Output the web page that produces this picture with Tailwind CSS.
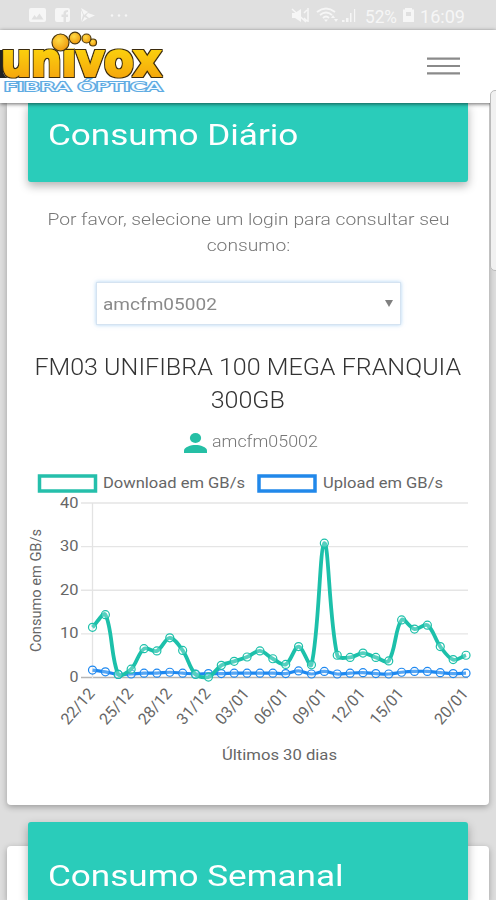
<!DOCTYPE html>
<html lang="pt-BR">
    <head>
        <meta charset="UTF-8">
        <meta name="viewport" content="width=device-width, initial-scale=1.0">
        <title>Univox - Consumo</title>
        <script src="https://cdn.jsdelivr.net/npm/@tailwindcss/browser@4"></script>
    </head>
    <body class="relative flex h-[900px] w-[496px] flex-col overflow-hidden bg-[#dedede] font-['Roboto',sans-serif]">
        <!-- Barra de status -->
        <div class="flex h-[30px] shrink-0 items-center bg-[#e0e0e0] text-[#f6f6f6]">
            <svg class="h-[30px] w-[496px]" viewBox="0 0 496 30" fill="currentColor">
                <path fill-rule="evenodd" d="M31 8h13a2 2 0 0 1 2 2v10a2 2 0 0 1-2 2H31a2 2 0 0 1-2-2V10a2 2 0 0 1 2-2zm.5 11.500h12l-4-6-3 4-2-2.500z" />
                <path fill-rule="evenodd" d="M57 8h11a2 2 0 0 1 2 2v10a2 2 0 0 1-2 2h-2v-5h2v-2.500h-2v-1c0-1 .5-1.500 2-1.500V10c-3 0-4.500 1-4.500 3v1.500h-2V17h2v5H57a2 2 0 0 1-2-2V10a2 2 0 0 1 2-2z" />
                <path d="M81 8l7 4-4 3zM81 10l2 5-2 7zM82 22l2.500-5 3 1.500zM88 13l7 2.500-6 2.500-3-2.500z" />
                <circle cx="112" cy="15.500" r="1.200" />
                <circle cx="119" cy="15.500" r="1.200" />
                <circle cx="126" cy="15.500" r="1.200" />
                <path d="M292 13h3l6-4v13l-6-4h-3z" />
                <path d="M292 9l14 13M304 13l3-3M304 18l3 3M308 8v14" fill="none" stroke="currentColor" stroke-width="1.500" />
                <path d="M317 12q9-7 18 0M320 15q6-5 12 0M323 18q3-3 6 0" fill="none" stroke="currentColor" stroke-width="1.800" />
                <path d="M326 22l-2-2.500h4zM331 18l2-3 2 3zM334 19h4l-2 3z" />
                <path d="M342 20h2.500v2H342zM346 18h2.500v4H346zM350 13h1.500v9H350zM354 9h1.200v13H354z" />
                <text x="365" y="22.500" font-size="19" textLength="32" lengthAdjust="spacingAndGlyphs">52%</text>
                <path fill-rule="evenodd" d="M405 8h7v1.500h2V22h-11V9.500h2zM406 12v4h5v-4z" />
                <text x="420" y="22.500" font-size="19" textLength="45" lengthAdjust="spacingAndGlyphs">16:09</text>
            </svg>
        </div>
        <!-- Cabeçalho -->
        <header class="z-20 flex h-[73px] shrink-0 justify-between bg-white shadow-[0_1px_4px_rgba(0,0,0,0.6)]">
            <svg class="h-[73px] w-[168px]" viewBox="0 30 168 73">
                <defs>
                    <linearGradient id="gold" x1="0" y1="0" x2="0" y2="1">
                        <stop offset="0.3" stop-color="#fbd010" />
                        <stop offset="1" stop-color="#f39a10" />
                    </linearGradient>
                    <radialGradient id="ball" cx="0.4" cy="0.35" r="0.7">
                        <stop offset="0" stop-color="#ffdb45" />
                        <stop offset="1" stop-color="#ee960b" />
                    </radialGradient>
                    <filter id="outline" x="-5%" y="-5%" width="110%" height="110%">
                        <feMorphology in="SourceAlpha" operator="dilate" radius="1" result="fat" />
                        <feFlood flood-color="#3a2c0c" />
                        <feComposite in2="fat" operator="in" />
                        <feMerge>
                            <feMergeNode />
                            <feMergeNode in="SourceGraphic" />
                        </feMerge>
                    </filter>
                </defs>
                <path d="M0 50h3v20q0 6 5 8H0z" fill="#222" />
                <text filter="url(#outline)" x="1" y="76" font-family="DejaVu Sans" font-weight="700" font-size="46" textLength="160" lengthAdjust="spacingAndGlyphs" fill="url(#gold)" stroke="url(#gold)" stroke-width="2.200">univox</text>
                <!-- tapa o pingo do i -->
                <path d="M58 34h20v14.500H58z" fill="#fff" />
                <g fill="url(#ball)" stroke="#4a380f" stroke-width="1.200">
                    <circle cx="93" cy="42.500" r="3.500" />
                    <circle cx="86.500" cy="38.500" r="4.500" />
                    <circle cx="75" cy="38" r="5.800" />
                    <circle cx="60.500" cy="42.500" r="8.500" />
                </g>
                <text x="4" y="90.500" font-family="DejaVu Sans" font-size="12" textLength="158" lengthAdjust="spacingAndGlyphs" fill="#f4faff" stroke="#5fabe2" stroke-width="2" paint-order="stroke">FIBRA ÓPTICA</text>
            </svg>
            <button class="mt-[27px] mr-[36px] h-[18px] w-[33px]">
                <svg class="h-[18px] w-[33px]" viewBox="0 0 33 18" fill="#8a8a8a">
                    <path d="M0 .5h33v2.200H0zM0 7.900h33v2.200H0zM0 15.300h33v2.200H0z" />
                </svg>
            </button>
        </header>
        <main class="flex flex-col pl-[7px]">
            <!-- Consumo diário -->
            <section class="flex h-[702px] w-[482px] shrink-0 flex-col items-center rounded-b-[4px] bg-white shadow-[0_2px_6px_rgba(0,0,0,0.3)]">
                <div class="flex h-[79px] w-[440px] shrink-0 items-start rounded-b-[3px] bg-[#2accba] pl-[20px] shadow-[0_4px_10px_rgba(0,0,0,0.3)]">
                    <h2 class="mt-[14px] origin-left scale-x-[1.17] text-[30px] leading-[36px] whitespace-nowrap text-white">Consumo Diário</h2>
                </div>
                <p class="mt-[24px] scale-x-[1.133] text-center text-[17px] leading-[26px] font-light whitespace-nowrap text-[#777]">Por favor, selecione um login para consultar seu<br>consumo:</p>
                <div class="mt-[24px] flex h-[43px] w-[305px] shrink-0 items-center justify-between border border-[#d5e3f1] bg-white pr-[7px] pl-[6px] shadow-[0_0_4px_rgba(120,180,235,0.6)]">
                    <span class="mt-[2px] origin-left scale-x-[1.12] text-[17px] text-[#8a8a8a]">amcfm05002</span>
                    <svg class="h-[7px] w-[8px]" viewBox="0 0 8 7"><path d="M0 0h8L4 7z" fill="#808080" /></svg>
                </div>
                <h3 class="mt-[26px] scale-x-[1.09] text-center text-[23px] leading-[33px] font-light whitespace-nowrap text-[#333]">FM03 UNIFIBRA 100 MEGA FRANQUIA<br>300GB</h3>
                <div class="mt-[11px] flex h-[27px] w-[128px] items-center">
                    <svg class="mt-[3px] h-[20px] w-[23px] shrink-0" viewBox="0 0 23 20" fill="#25bfa5">
                        <ellipse cx="11.500" cy="5" rx="5.600" ry="5" />
                        <path d="M0 20v-2.500C0 14 7 12 11.500 12S23 14 23 17.500V20z" />
                    </svg>
                    <span class="ml-[5px] origin-left scale-x-[1.05] text-[17px] font-light text-[#777]">amcfm05002</span>
                </div>
                <!-- Gráfico -->
                <svg id="chart" class="mt-[5px] h-[312px] w-[482px] shrink-0" viewBox="7 460 482 312" fill="#666" font-size="15.500">
                    <rect x="39.500" y="476" width="56" height="15" fill="none" stroke="#25bfab" stroke-width="3.500" />
                    <text x="103" y="488" textLength="142" lengthAdjust="spacingAndGlyphs">Download em GB/s</text>
                    <rect x="259" y="476" width="56" height="15" fill="none" stroke="#2188ea" stroke-width="3.500" />
                    <text x="323" y="488" textLength="120" lengthAdjust="spacingAndGlyphs">Upload em GB/s</text>
                    <text x="222" y="759.500" textLength="115" lengthAdjust="spacingAndGlyphs">Últimos 30 dias</text>
                    <text transform="translate(41 652) rotate(-90)" textLength="123" lengthAdjust="spacingAndGlyphs">Consumo em GB/s</text>
                </svg>
            </section>
            <!-- Consumo semanal -->
            <section class="mt-[41px] flex h-[54px] w-[482px] shrink-0 flex-col items-center rounded-t-[4px] bg-white shadow-[0_2px_6px_rgba(0,0,0,0.3)]">
                <div class="-mt-[24px] flex h-[78px] w-[440px] shrink-0 items-start rounded-t-[3px] bg-[#2accba] pl-[20px] shadow-[0_4px_10px_rgba(0,0,0,0.3)]">
                    <h2 class="mt-[36px] origin-left scale-x-[1.17] text-[30px] leading-[36px] whitespace-nowrap text-white">Consumo Semanal</h2>
                </div>
            </section>
        </main>
        <!-- Barra de rolagem -->
        <div class="absolute top-[90px] left-[489.500px] z-30 h-[181px] w-[12px] rounded-[5px] border border-[#bbb] bg-[#f1f1f1]"></div>
    </body>
</html>
<script>
const chart = document.getElementById('chart');
const left = 92.5;
const step = 12.88;
const top40 = 503;
const base = 677.5;
const unit = (base - top40) / 40;

const download = [11.5, 14.4, 0.7, 1.9, 6.6, 6.1, 9.1, 6.2, 0.7, 0.1, 2.8, 3.7, 4.7, 6.1, 4.3, 3.0, 7.1, 2.9, 30.8, 5.1, 4.6, 5.6, 4.6, 3.8, 13.2, 11.1, 12, 7.1, 4.1, 5.1];
const upload = [1.7, 1.3, 0.7, 0.8, 1, 1, 1.2, 1, 0.8, 0.9, 0.9, 1, 1, 1, 1, 0.9, 1.5, 0.8, 1.4, 0.8, 1, 1.1, 0.9, 0.8, 1.2, 1.4, 1.4, 1.1, 0.9, 1];
const days = { 0: '22/12', 3: '25/12', 6: '28/12', 9: '31/12', 12: '03/01', 15: '06/01', 18: '09/01', 21: '12/01', 24: '15/01', 29: '20/01' };

function add(name, attrs, text) {
  const el = document.createElementNS('http://www.w3.org/2000/svg', name);
  for (const key in attrs) el.setAttribute(key, attrs[key]);
  if (text) el.textContent = text;
  chart.appendChild(el);
}

// Grade e escala vertical
for (let v = 0; v <= 40; v += 10) {
  const y = base - v * unit;
  add('path', { d: `M81 ${y}H468`, stroke: v ? '#e5e5e5' : '#b5b5b5', 'stroke-width': v ? 1.3 : 1.6 });
  add('text', { x: v ? 60 : 69.5, y: y + 4.5, textLength: v ? 18.5 : 9, lengthAdjust: 'spacingAndGlyphs' }, String(v));
}
add('path', { d: `M92.5 503V678`, stroke: '#e3e3e3', 'stroke-width': 1.3 });

// Datas inclinadas
for (const i in days) {
  add('text', {
    transform: `translate(${left + i * step + 3} 694) rotate(-49)`,
    'text-anchor': 'end',
    'font-size': 16,
    textLength: 42,
    lengthAdjust: 'spacingAndGlyphs'
  }, days[i]);
}

// Curva suave com pontos de controle limitados à área do gráfico
function drawLine(values, color, width) {
  const pts = values.map((v, i) => ({ x: left + i * step, y: base - v * unit }));
  const cap = (y) => Math.min(base, Math.max(top40, y));
  const ctrl = pts.map((p, i) => {
    const a = pts[i - 1] || p;
    const b = pts[i + 1] || p;
    const d1 = Math.hypot(p.x - a.x, p.y - a.y);
    const d2 = Math.hypot(b.x - p.x, b.y - p.y);
    const fa = 0.35 * d1 / (d1 + d2);
    const fb = 0.35 * d2 / (d1 + d2);
    return {
      px: p.x - fa * (b.x - a.x), py: cap(p.y - fa * (b.y - a.y)),
      nx: p.x + fb * (b.x - a.x), ny: cap(p.y + fb * (b.y - a.y))
    };
  });
  let d = `M${pts[0].x} ${pts[0].y}`;
  for (let i = 1; i < pts.length; i++) {
    d += `C${ctrl[i - 1].nx} ${ctrl[i - 1].ny} ${ctrl[i].px} ${ctrl[i].py} ${pts[i].x} ${pts[i].y}`;
  }
  add('path', { d, fill: 'none', stroke: color, 'stroke-width': width, 'stroke-linejoin': 'round' });
  pts.forEach((p) => add('circle', { cx: p.x, cy: p.y, r: 4, fill: '#ffffff', 'fill-opacity': 0.25, stroke: color, 'stroke-width': 1.2 }));
}

drawLine(upload, '#1e88f0', 3.2);
drawLine(download, '#1cc0aa', 3.8);
</script>
